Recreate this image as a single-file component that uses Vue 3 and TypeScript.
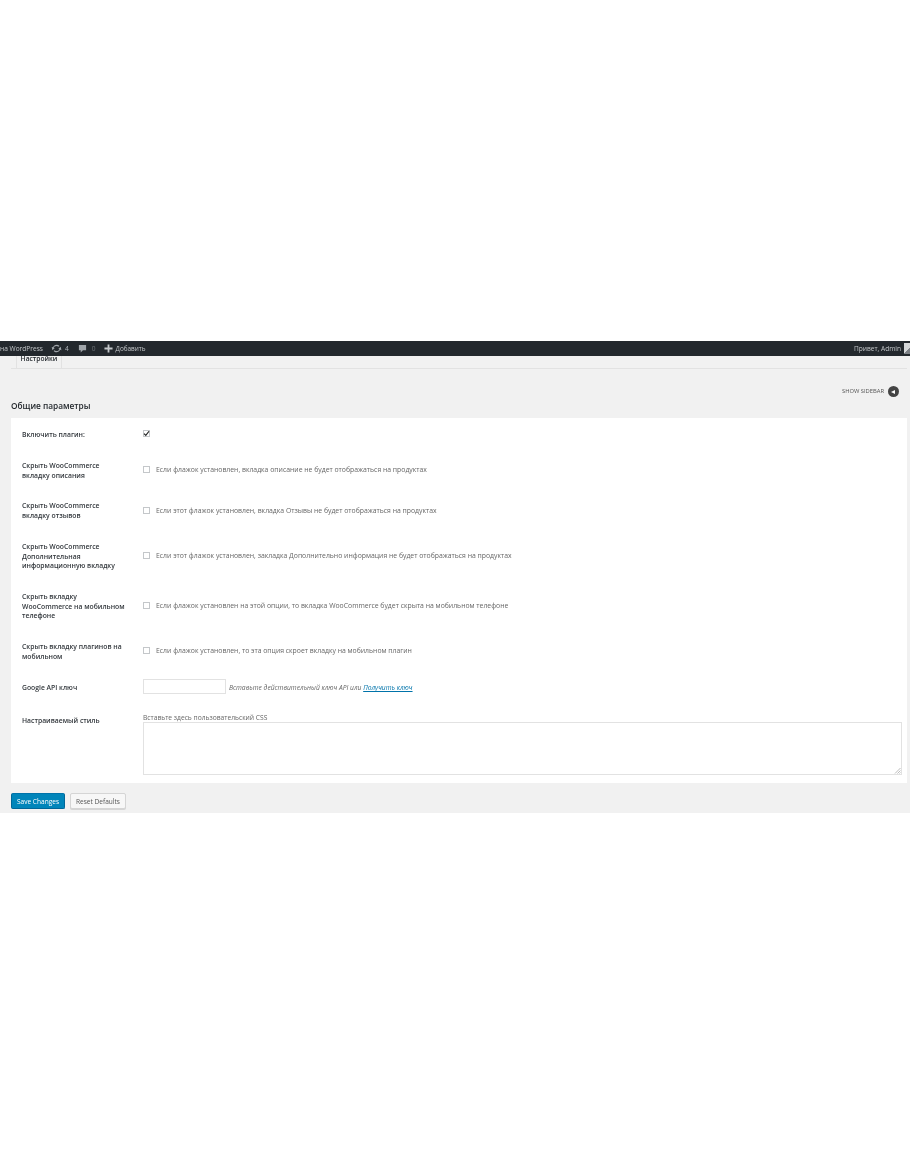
<script setup lang="ts">
interface Row {
  label: string[]
  hint: string
}

const rows: Row[] = [
  {
    label: ['Скрыть WooCommerce', 'вкладку описания'],
    hint: 'Если флажок установлен, вкладка описание не будет отображаться на продуктах',
  },
  {
    label: ['Скрыть WooCommerce', 'вкладку отзывов'],
    hint: 'Если этот флажок установлен, вкладка Отзывы не будет отображаться на продуктах',
  },
  {
    label: ['Скрыть WooCommerce', 'Дополнительная', 'информационную вкладку'],
    hint: 'Если этот флажок установлен, закладка Дополнительно информация не будет отображаться на продуктах',
  },
  {
    label: ['Скрыть вкладку', 'WooCommerce на мобильном', 'телефоне'],
    hint: 'Если флажок установлен на этой опции, то вкладка WooCommerce будет скрыта на мобильном телефоне',
  },
  {
    label: ['Скрыть вкладку плагинов на', 'мобильном'],
    hint: 'Если флажок установлен, то эта опция скроет вкладку на мобильном плагин',
  },
]
</script>

<template>
  <div class="page">
    <header class="adminbar">
      <span class="bar-text">на WordPress</span>
      <svg class="ico-update" viewBox="0 0 20 20" width="11" height="11">
        <path d="M10.2 3.3c-3 0-5.600 1.900-6.500 4.600L1.300 7.200 2.500 13l4.400-3.900-2-.6c.7-1.900 2.600-3.200 4.800-3.200 1.500 0 2.900.7 3.800 1.700l1.900-1.700c-1.300-1.400-3.100-2-5.200-2zm7.500 3.700-4.400 3.900 2 .6c-.7 1.900-2.600 3.200-4.800 3.200-1.500 0-2.900-.7-3.800-1.700l-1.900 1.700c1.300 1.400 3.100 2.300 5.200 2.300 3 0 5.600-1.900 6.500-4.600l2.400.7z" fill="#a0a5aa" />
      </svg>
      <span class="bar-text count">4</span>
      <svg class="ico-comment" viewBox="0 0 20 20" width="9" height="9">
        <path d="M2 2h16v12h-7l-5 5v-5H2z" fill="#a0a5aa" />
      </svg>
      <span class="bar-text count zero">0</span>
      <svg class="ico-plus" viewBox="0 0 20 20" width="9" height="9">
        <path d="M8 1h4v7h7v4h-7v7H8v-7H1V8h7z" fill="#c4c7ca" />
      </svg>
      <span class="bar-text add">Добавить</span>
      <span class="bar-text greet">Привет, Admin</span>
      <span class="avatar"></span>
    </header>

    <main class="wrap">
      <nav class="tabs">
        <span class="tab">Настройки</span>
      </nav>

      <div class="sidebar-toggle">
        <span>SHOW SIDEBAR</span>
        <span class="circle"><i></i></span>
      </div>

      <h2 class="title">Общие параметры</h2>

      <section class="card">
        <div class="row first">
          <div class="label">Включить плагин:</div>
          <div class="field">
            <span class="check checked">
              <svg viewBox="0 0 10 10" width="7" height="7">
                <path d="M1.500 5.200 4 7.800 8.600 1.800" fill="none" stroke="#222" stroke-width="1.700" />
              </svg>
            </span>
          </div>
        </div>

        <div v-for="row in rows" :key="row.hint" class="row">
          <div class="label">
            <div v-for="line in row.label" :key="line">{{ line }}</div>
          </div>
          <div class="field">
            <span class="check"></span>
            <span class="hint">{{ row.hint }}</span>
          </div>
        </div>

        <div class="row api">
          <div class="label">Google API ключ</div>
          <div class="field">
            <span class="text-input"></span>
            <em class="api-hint">Вставьте действительный ключ API или <a href="#">Получить ключ</a></em>
          </div>
        </div>

        <div class="row css">
          <div class="label">Настраиваемый стиль</div>
          <div class="field stack">
            <span class="css-hint">Вставьте здесь пользовательский CSS</span>
            <div class="textarea">
              <svg class="grip" viewBox="0 0 7 7" width="7" height="7">
                <path d="M6.500 1 1 6.500M6.500 3.500 3.500 6.500M6.500 5.500 5.500 6.500" stroke="#aaa" stroke-width="0.800" />
              </svg>
            </div>
          </div>
        </div>
      </section>

      <div class="actions">
        <span class="btn primary">Save Changes</span>
        <span class="btn">Reset Defaults</span>
      </div>
    </main>
  </div>
</template>

<style>
html,
body {
  margin: 0;
  background: #fff;
}
</style>

<style scoped>
.page {
  padding-top: 341px;
  height: 814px;
  overflow: hidden;
  font-family: "Open Sans", "Liberation Sans", sans-serif;
  font-size: 6.850px;
  color: #444;
  filter: blur(0.35px);
}

.adminbar {
  height: 15px;
  background: #23282d;
  display: flex;
  align-items: center;
  overflow: hidden;
}

.bar-text {
  color: #c4c7ca;
  font-size: 6.600px;
  white-space: nowrap;
}

.ico-update {
  margin-left: 8px;
}

.count {
  margin-left: 3px;
  color: #b4b9be;
}

.zero {
  margin-left: 5px;
  color: #6d7277;
}

.ico-comment {
  margin-left: 9px;
}

.ico-plus {
  margin-left: 8px;
  margin-right: 3px;
}

.add {
  font-size: 6.400px;
}

.greet {
  margin-left: auto;
}

.avatar {
  width: 8px;
  height: 11px;
  margin-left: 3px;
  margin-right: -2px;
  background: linear-gradient(135deg, #d5d7d9 55%, #7d8186 55%);
  flex-shrink: 0;
}

.wrap {
  background: #f1f1f1;
  height: 457px;
  padding: 0 3px 0 11px;
}

.tabs {
  height: 12px;
  border-bottom: 1px solid #e2e2e2;
  padding-left: 5px;
  display: flex;
}

.tab {
  width: 46px;
  height: 13px;
  box-sizing: border-box;
  border: 1px solid #e2e2e2;
  border-top: 0;
  background: #f1f1f1;
  text-align: center;
  font-size: 6.700px;
  font-weight: 600;
  line-height: 6px;
  color: #23282d;
}

.sidebar-toggle {
  display: flex;
  justify-content: flex-end;
  align-items: center;
  gap: 4px;
  padding: 17px 8px 0 0;
  font-size: 5.800px;
  color: #555;
  line-height: 11px;
}

.circle {
  width: 11px;
  height: 11px;
  border-radius: 50%;
  background: #444;
  display: flex;
  align-items: center;
  justify-content: center;
}

.circle i {
  border-right: 4px solid #fff;
  border-top: 2.500px solid transparent;
  border-bottom: 2.500px solid transparent;
  margin-right: 1px;
}

.title {
  margin: 2px 0 6px;
  font-size: 8.300px;
  font-weight: 600;
  line-height: 13px;
  color: #23282d;
}

.card {
  background: #fff;
  height: 365px;
  box-sizing: border-box;
}

.row {
  display: flex;
  align-items: center;
  padding: 10.500px 0 9.500px;
}

.first {
  padding-bottom: 10.300px;
}

.label {
  width: 132px;
  padding: 1px 0 0 11px;
  box-sizing: border-box;
  flex-shrink: 0;
  font-size: 6.800px;
  font-weight: 600;
  line-height: 9.700px;
  color: #32373c;
}

.field {
  display: flex;
  align-items: center;
  min-width: 0;
  flex: 1;
  padding-bottom: 1px;
}

.check {
  width: 7px;
  height: 7px;
  box-sizing: border-box;
  border: 1px solid #c4c7ca;
  background: #fff;
  margin-right: 6px;
  display: flex;
  align-items: center;
  justify-content: center;
}

.checked svg {
  flex-shrink: 0;
}

.hint {
  color: #666;
  white-space: nowrap;
}

.api {
  padding: 8px 0 9px;
}

.api .label {
  padding-top: 3px;
}

.api .field {
  padding-bottom: 0;
}

.text-input {
  width: 83px;
  height: 15px;
  box-sizing: border-box;
  border: 1px solid #e2e2e2;
  background: #fff;
}

.api-hint {
  margin-left: 3px;
  padding-top: 3px;
  color: #666;
  font-size: 6.700px;
}

.api-hint a {
  color: #0073aa;
}

.css {
  align-items: flex-start;
  padding: 10px 0 0;
}

.css .label {
  padding-top: 3px;
}

.stack {
  flex-direction: column;
  align-items: stretch;
  padding: 0 5px 0 0;
}

.css-hint {
  font-size: 6.700px;
  line-height: 9px;
  color: #666;
}

.textarea {
  height: 53px;
  box-sizing: border-box;
  border: 1px solid #e2e2e2;
  position: relative;
}

.grip {
  position: absolute;
  right: 0;
  bottom: 0;
}

.actions {
  display: flex;
  gap: 5px;
  padding-top: 10px;
}

.btn {
  height: 16px;
  box-sizing: border-box;
  border: 1px solid #d5d5d5;
  border-radius: 2px;
  background: #f7f7f7;
  color: #555;
  font-size: 6.550px;
  line-height: 15px;
  width: 56px;
  text-align: center;
  box-shadow: 0 1px 0 #d5d5d5;
}

.primary {
  width: 54px;
  background: #0085ba;
  border-color: #0073aa #006799 #006799;
  color: #fff;
  box-shadow: none;
}
</style>
